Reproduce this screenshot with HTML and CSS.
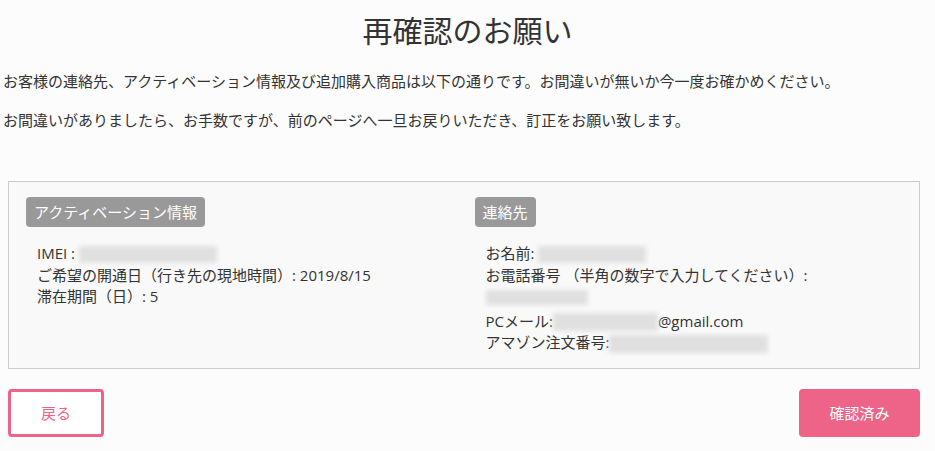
FILE: index.html
```html
<!DOCTYPE html>
<html lang="ja">
<head>
  <meta charset="UTF-8" />
  <title>再確認のお願い</title>
  <link rel="stylesheet" href="styles.css">
</head>
<body>

  <h1>再確認のお願い</h1>

  <div class="intro">
    <p>お客様の連絡先、アクティベーション情報及び追加購入商品は以下の通りです。お間違いが無いか今一度お確かめください。</p>
    <p>お間違いがありましたら、お手数ですが、前のページへ一旦お戻りいただき、訂正をお願い致します。</p>
  </div>

  <div class="confirm-box">
    <div class="col">
      <span class="badge">アクティベーション情報</span>
      <div class="info">
        <div>IMEI : <span class="blur w-imei"></span></div>
        <div>ご希望の開通日（行き先の現地時間）: 2019/8/15</div>
        <div>滞在期間（日）: 5</div>
      </div>
    </div>
    <div class="col">
      <span class="badge">連絡先</span>
      <div class="info">
        <div>お名前: <span class="blur w-name"></span></div>
        <div>お電話番号 （半角の数字で入力してください）:</div>
        <div class="phone"><span class="blur w-phone"></span></div>
        <div>PCメール:<span class="blur w-mail"></span>@gmail.com</div>
        <div>アマゾン注文番号:<span class="blur w-order"></span></div>
      </div>
    </div>
  </div>

  <div class="actions">
    <button class="btn btn-back">戻る</button>
    <button class="btn btn-ok">確認済み</button>
  </div>

</body>
</html>
```

FILE: styles.css
```css
body {
  font-family: 'Open Sans', 'Noto Sans CJK JP', sans-serif;
  background: #fcfcfc;
  color: #333;
  margin: 0;
  padding: 0;
}
h1 {
  text-align: center;
  font-size: 30px;
  font-weight: 400;
  line-height: 36px;
  margin: 13px 0 0;
}
.intro {
  padding-left: 3px;
  margin-top: 21px;
}
.intro p {
  font-size: 15px;
  line-height: 22px;
  margin: 0 0 17px;
}
.confirm-box {
  margin: 50px 15px 0 8px;
  background: #f9f9f9;
  border: 1px solid #ccc;
  padding: 15px 17px 14px 17px;
  display: grid;
  grid-template-columns: 1fr 1fr;
  column-gap: 21px;
}
.badge {
  display: inline-block;
  background: #999;
  color: white;
  font-size: 15px;
  line-height: 30px;
  padding: 0 8px;
  border-radius: 4px;
}
.info {
  padding-left: 11px;
  margin-top: 16px;
  font-size: 15px;
  line-height: 21.5px;
}
.blur {
  display: inline-block;
  vertical-align: middle;
  height: 17px;
  background: #e0e0e0;
  filter: blur(2px);
}
.w-imei { width: 138px; }
.w-name { width: 108px; }
.w-phone { width: 102px; height: 15px; }
.w-mail { width: 105px; height: 18px; }
.w-order { width: 159px; height: 18px; }
.phone {
  margin-bottom: 3px;
}
.actions {
  display: flex;
  justify-content: space-between;
  margin: 20px 15px 0 8px;
}
.btn {
  font-family: inherit;
  font-size: 15px;
  height: 48px;
  border-radius: 4px;
  cursor: pointer;
}
.btn-back {
  width: 96px;
  background: white;
  color: #ee6488;
  border: 3px solid #ee6488;
}
.btn-ok {
  width: 121px;
  background: #ee6488;
  color: white;
  border: none;
}
```
